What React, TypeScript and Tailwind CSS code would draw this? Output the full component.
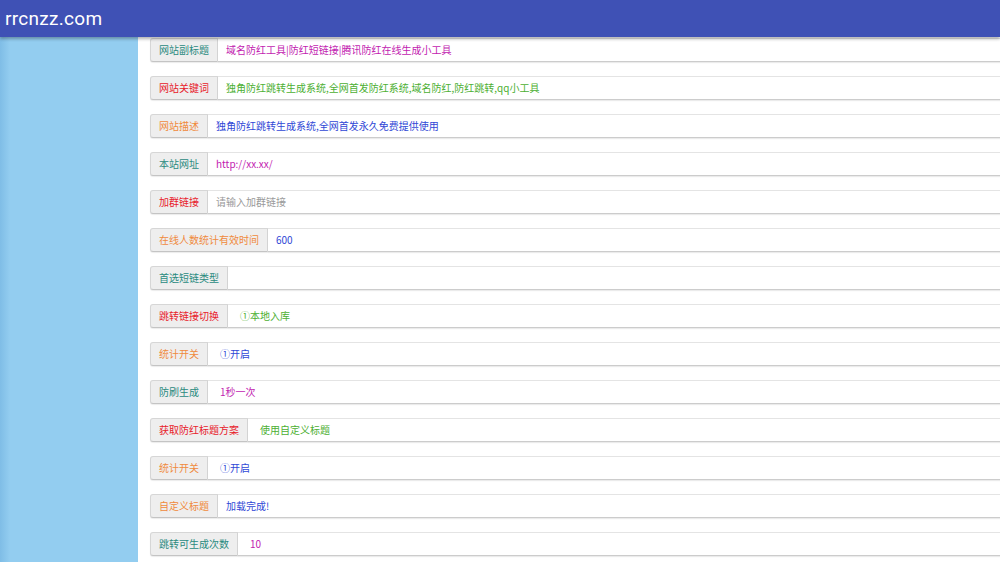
import React from "react";

type Row = { label: string; lc: string; value: string; vc: string; sel?: boolean };

const TEAL = "text-[#2a8a7e]";
const RED = "text-[#e8202a]";
const ORANGE = "text-[#f08a3c]";
const MAG = "text-[#c21bb0]";
const GREEN = "text-[#4caf32]";
const BLUE = "text-[#2f47d6]";

const rows: Row[] = [
  { label: "网站副标题", lc: TEAL, value: "域名防红工具|防红短链接|腾讯防红在线生成小工具", vc: MAG },
  { label: "网站关键词", lc: RED, value: "独角防红跳转生成系统,全网首发防红系统,域名防红,防红跳转,qq小工具", vc: GREEN },
  { label: "网站描述", lc: ORANGE, value: "独角防红跳转生成系统,全网首发永久免费提供使用", vc: BLUE },
  { label: "本站网址", lc: TEAL, value: "http://xx.xx/", vc: MAG },
  { label: "加群链接", lc: RED, value: "请输入加群链接", vc: "text-[#999]" },
  { label: "在线人数统计有效时间", lc: ORANGE, value: "600", vc: BLUE },
  { label: "首选短链类型", lc: TEAL, value: "", vc: BLUE, sel: true },
  { label: "跳转链接切换", lc: RED, value: "①本地入库", vc: GREEN, sel: true },
  { label: "统计开关", lc: ORANGE, value: "①开启", vc: BLUE, sel: true },
  { label: "防刷生成", lc: TEAL, value: "1秒一次", vc: MAG, sel: true },
  { label: "获取防红标题方案", lc: RED, value: "使用自定义标题", vc: GREEN, sel: true },
  { label: "统计开关", lc: ORANGE, value: "①开启", vc: BLUE, sel: true },
  { label: "自定义标题", lc: ORANGE, value: "加载完成!", vc: BLUE },
  { label: "跳转可生成次数", lc: TEAL, value: "10", vc: MAG, sel: true },
];

export default function App() {
  return (
    <div
      className="relative w-[1000px] h-[562px] overflow-hidden bg-white"
      style={{ fontFamily: '"Noto Sans CJK SC", "Noto Sans", sans-serif' }}
    >
      <header className="absolute top-0 left-0 right-0 z-10 h-[37px] bg-[#3f51b5] flex items-center pl-[5px] shadow-[0_2px_3px_rgba(0,0,0,0.3)]">
        <span
          className="text-white text-[19px] leading-none tracking-[0.3px]"
          style={{ fontFamily: 'Roboto, "Liberation Sans", sans-serif' }}
        >
          rrcnzz.com
        </span>
      </header>
      <div className="flex h-full">
        <aside className="w-[138px] shrink-0 h-full bg-[linear-gradient(to_right,#7fbde6_0px,#93cdf0_10px,#93cdf0_100%)]" />
        <main className="flex-1 overflow-hidden pl-[12px] pt-[38px]">
          <div className="flex flex-col gap-[14px] w-[880px]">
            {rows.map((r, i) => (
              <div key={i} className="flex h-[24px] text-[10px] leading-none">
                <div
                  className={`flex items-center px-[8px] bg-[#eeeeee] border border-[#d6d6d6] border-b-[#c4c4c4] rounded-l-[3px] shadow-[0_1px_1px_rgba(0,0,0,0.08)] whitespace-nowrap ${r.lc}`}
                >
                  {r.label}
                </div>
                <div
                  className={`flex-1 flex items-center ${r.sel ? "pl-[12px]" : "pl-[8px]"} bg-white border-t border-b border-t-[#e4e4e4] border-b-[#cccccc] shadow-[0_1px_1px_rgba(0,0,0,0.08)] whitespace-nowrap ${r.vc}`}
                >
                  {r.value}
                </div>
              </div>
            ))}
          </div>
        </main>
      </div>
    </div>
  );
}
